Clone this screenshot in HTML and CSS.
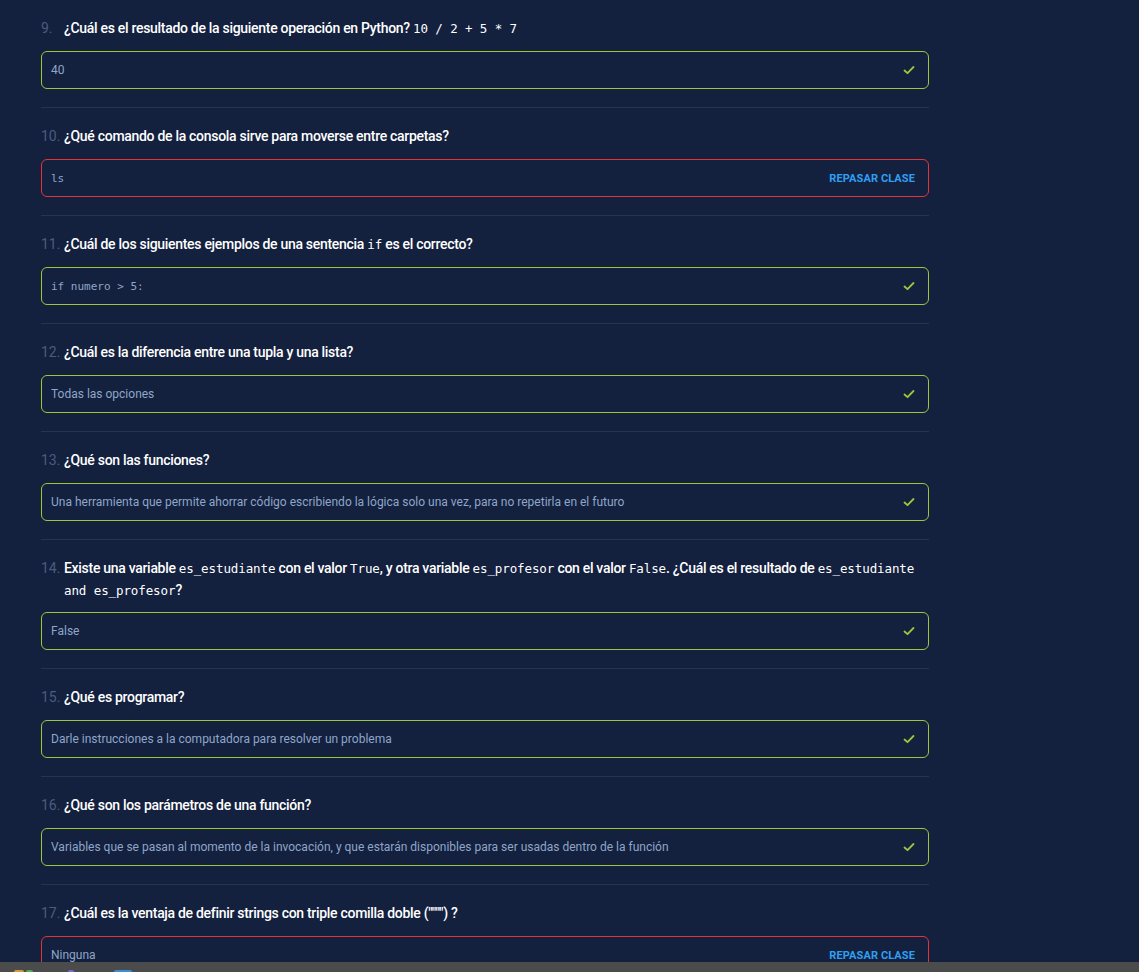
FILE: index.html
```html
<!DOCTYPE html>
<html lang="es">
<head>
<meta charset="utf-8">
<title>Quiz</title>
<link rel="stylesheet" href="styles.css">
</head>
<body>
<main class="quiz">
  <section class="item">
    <h3 class="q"><span class="num">9.</span><span class="txt">¿Cuál es el resultado de la siguiente operación en Python? <code>10 / 2 + 5 * 7</code></span></h3>
    <div class="answer ok"><span class="val">40</span><svg class="check" viewBox="0 0 12 12"><path d="M1.5 6.5 L4.5 9.2 L10.5 3"/></svg></div>
  </section>
  <section class="item">
    <h3 class="q"><span class="num">10.</span><span class="txt">¿Qué comando de la consola sirve para moverse entre carpetas?</span></h3>
    <div class="answer bad"><span class="val mono">ls</span><span class="review">Repasar clase</span></div>
  </section>
  <section class="item">
    <h3 class="q"><span class="num">11.</span><span class="txt">¿Cuál de los siguientes ejemplos de una sentencia <code>if</code> es el correcto?</span></h3>
    <div class="answer ok"><span class="val mono">if numero &gt; 5:</span><svg class="check" viewBox="0 0 12 12"><path d="M1.5 6.5 L4.5 9.2 L10.5 3"/></svg></div>
  </section>
  <section class="item">
    <h3 class="q"><span class="num">12.</span><span class="txt">¿Cuál es la diferencia entre una tupla y una lista?</span></h3>
    <div class="answer ok"><span class="val">Todas las opciones</span><svg class="check" viewBox="0 0 12 12"><path d="M1.5 6.5 L4.5 9.2 L10.5 3"/></svg></div>
  </section>
  <section class="item">
    <h3 class="q"><span class="num">13.</span><span class="txt">¿Qué son las funciones?</span></h3>
    <div class="answer ok"><span class="val">Una herramienta que permite ahorrar código escribiendo la lógica solo una vez, para no repetirla en el futuro</span><svg class="check" viewBox="0 0 12 12"><path d="M1.5 6.5 L4.5 9.2 L10.5 3"/></svg></div>
  </section>
  <section class="item">
    <h3 class="q narrow"><span class="num">14.</span><span class="txt">Existe una variable <code>es_estudiante</code> con el valor <code>True</code>, y otra variable <code>es_profesor</code> con el valor <code>False</code>. ¿Cuál es el resultado de <code>es_estudiante</code> <code class="nowrap">and es_profesor</code>?</span></h3>
    <div class="answer ok"><span class="val">False</span><svg class="check" viewBox="0 0 12 12"><path d="M1.5 6.5 L4.5 9.2 L10.5 3"/></svg></div>
  </section>
  <section class="item">
    <h3 class="q"><span class="num">15.</span><span class="txt">¿Qué es programar?</span></h3>
    <div class="answer ok"><span class="val">Darle instrucciones a la computadora para resolver un problema</span><svg class="check" viewBox="0 0 12 12"><path d="M1.5 6.5 L4.5 9.2 L10.5 3"/></svg></div>
  </section>
  <section class="item">
    <h3 class="q"><span class="num">16.</span><span class="txt">¿Qué son los parámetros de una función?</span></h3>
    <div class="answer ok"><span class="val">Variables que se pasan al momento de la invocación, y que estarán disponibles para ser usadas dentro de la función</span><svg class="check" viewBox="0 0 12 12"><path d="M1.5 6.5 L4.5 9.2 L10.5 3"/></svg></div>
  </section>
  <section class="item">
    <h3 class="q"><span class="num">17.</span><span class="txt">¿Cuál es la ventaja de definir strings con triple comilla doble ("""") ?</span></h3>
    <div class="answer bad"><span class="val">Ninguna</span><span class="review">Repasar clase</span></div>
  </section>
</main>
<div class="taskbar">
  <span class="tb-icon orange"></span>
  <span class="tb-icon green"></span>
  <span class="tb-icon purple"></span>
  <span class="tb-icon blue"></span>
</div>
</body>
</html>
```

FILE: styles.css
```css
* { box-sizing: border-box; }
html, body {
  margin: 0;
  padding: 0;
  background: #13203e;
  height: 100%;
  overflow: hidden;
}
body {
  font-family: Roboto, "Liberation Sans", Arial, sans-serif;
  color: #ffffff;
}
.quiz {
  width: 888px;
  margin-left: 41px;
}
.item {
  padding: 17px 0 18px;
  border-bottom: 1px solid #26344f;
}
.q {
  display: flex;
  margin: 0 0 12px;
  font-size: 14px;
  line-height: 22px;
  font-weight: 500;
  letter-spacing: -0.3px;
  color: #ffffff;
}
.q .num {
  flex: 0 0 23px;
  color: #4c5d7c;
  font-weight: 400;
  letter-spacing: 0;
}
.q .txt { flex: 1; }
.q code {
  font-family: "DejaVu Sans Mono", monospace;
  font-size: 12.5px;
  font-weight: 400;
  line-height: 1;
  letter-spacing: -0.1px;
}
.q code.nowrap { white-space: nowrap; }
.q.narrow { letter-spacing: -0.3px; margin-bottom: 11px; }
.q.narrow code { letter-spacing: -0.1px; }
.answer {
  display: flex;
  align-items: center;
  justify-content: space-between;
  height: 38px;
  padding: 0 13px 0 9px;
  border: 1px solid #98c93c;
  border-radius: 6px;
  font-size: 12px;
  color: #8fa6c8;
}
.answer.bad { border-color: #e5333a; }
.val.mono {
  font-family: "DejaVu Sans Mono", monospace;
  font-size: 11px;
}
.check {
  width: 12px;
  height: 12px;
  flex: none;
}
.check path {
  fill: none;
  stroke: #98c93c;
  stroke-width: 1.8;
  stroke-linecap: round;
  stroke-linejoin: round;
}
.review {
  text-transform: uppercase;
  font-weight: 700;
  font-size: 11px;
  color: #2f9ff2;
  letter-spacing: 0.1px;
}
.taskbar {
  position: fixed;
  left: 0;
  right: 0;
  bottom: 0;
  height: 10px;
  background: #4b4b4b;
}
.tb-icon {
  position: absolute;
  bottom: 0;
  height: 2px;
  border-radius: 2px 2px 0 0;
}
.tb-icon.orange { left: 14px; width: 10px; background: #d49a3a; }
.tb-icon.green { left: 26px; width: 7px; background: #4caf50; }
.tb-icon.purple { left: 68px; width: 6px; background: #7b6ad0; }
.tb-icon.blue { left: 114px; width: 18px; background: #3a8fd6; }
```
